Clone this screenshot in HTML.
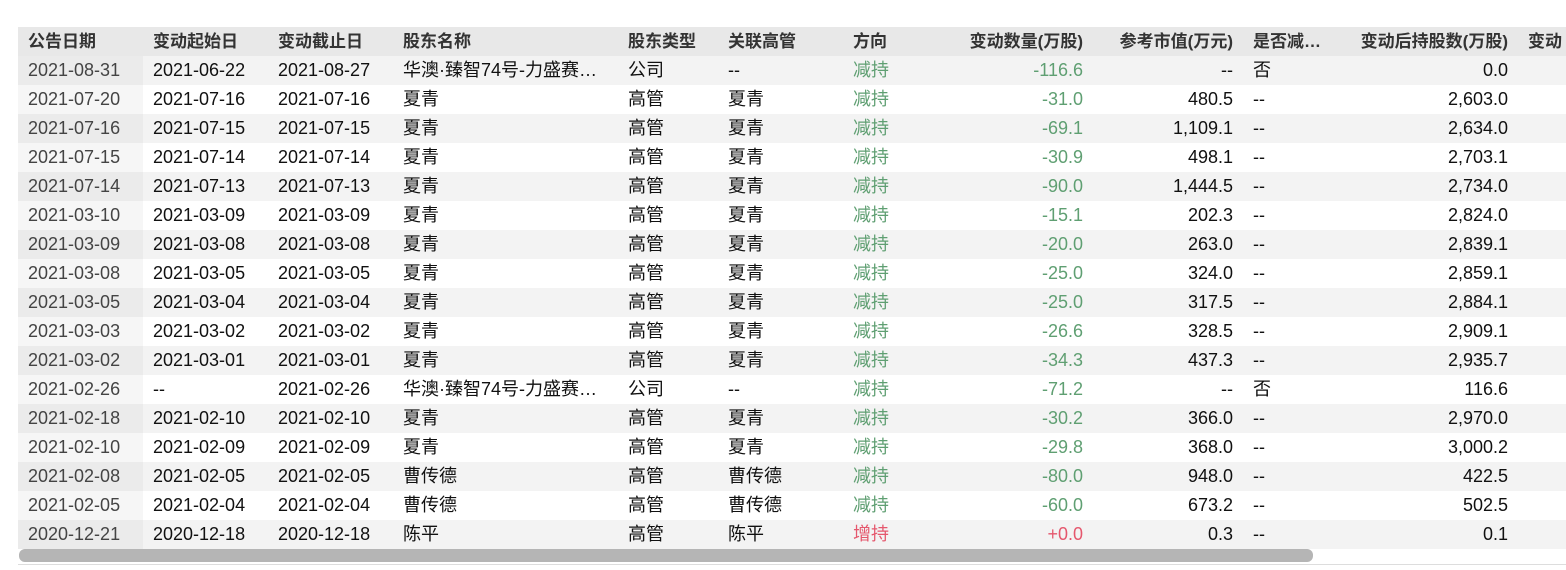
<!DOCTYPE html>
<html><head><meta charset="utf-8"><style>
body{margin:0;width:1566px;height:570px;background:#fff;overflow:hidden;font-family:"Liberation Sans","Noto Sans CJK SC",sans-serif;}
.wrap{position:absolute;left:18px;top:27px;width:1548px;overflow:hidden;}
table{border-collapse:collapse;table-layout:fixed;width:1600px;font-size:18px;}
th,td{height:29px;line-height:29px;padding:0 10px;white-space:nowrap;overflow:hidden;text-overflow:ellipsis;text-align:left;}
th{background:#e8e8e8;color:#333;font-weight:bold;font-size:17px;}
td{color:#111;}
tr:nth-child(even) td{background:#f3f3f3;}
td.f{color:#444;background:#f6f6f6;}
tr:nth-child(even) td.f{background:#ebebeb;}
.r{text-align:right;}
.g{color:#5f9f72;}
.red{color:#e5576d;}
.sb{position:absolute;left:19px;top:549px;width:1294px;height:13px;background:#b5b5b5;border-radius:6px;}
.ln{position:absolute;left:18px;top:564px;width:1548px;height:1px;background:#ddd;}
</style></head><body>
<div class="wrap"><table>
<colgroup><col style="width:125px"><col style="width:125px"><col style="width:125px"><col style="width:225px"><col style="width:100px"><col style="width:125px"><col style="width:100px"><col style="width:150px"><col style="width:150px"><col style="width:100px"><col style="width:175px"><col style="width:100px"></colgroup>
<tr><th>公告日期</th><th>变动起始日</th><th>变动截止日</th><th>股东名称</th><th>股东类型</th><th>关联高管</th><th>方向</th><th class="r">变动数量(万股)</th><th class="r">参考市值(万元)</th><th>是否减…</th><th class="r">变动后持股数(万股)</th><th>变动</th></tr>
<tr><td class="f">2021-08-31</td><td>2021-06-22</td><td>2021-08-27</td><td>华澳·臻智74号-力盛赛车…</td><td>公司</td><td>--</td><td class="g">减持</td><td class="r g">-116.6</td><td class="r">--</td><td>否</td><td class="r">0.0</td><td></td></tr>
<tr><td class="f">2021-07-20</td><td>2021-07-16</td><td>2021-07-16</td><td>夏青</td><td>高管</td><td>夏青</td><td class="g">减持</td><td class="r g">-31.0</td><td class="r">480.5</td><td>--</td><td class="r">2,603.0</td><td></td></tr>
<tr><td class="f">2021-07-16</td><td>2021-07-15</td><td>2021-07-15</td><td>夏青</td><td>高管</td><td>夏青</td><td class="g">减持</td><td class="r g">-69.1</td><td class="r">1,109.1</td><td>--</td><td class="r">2,634.0</td><td></td></tr>
<tr><td class="f">2021-07-15</td><td>2021-07-14</td><td>2021-07-14</td><td>夏青</td><td>高管</td><td>夏青</td><td class="g">减持</td><td class="r g">-30.9</td><td class="r">498.1</td><td>--</td><td class="r">2,703.1</td><td></td></tr>
<tr><td class="f">2021-07-14</td><td>2021-07-13</td><td>2021-07-13</td><td>夏青</td><td>高管</td><td>夏青</td><td class="g">减持</td><td class="r g">-90.0</td><td class="r">1,444.5</td><td>--</td><td class="r">2,734.0</td><td></td></tr>
<tr><td class="f">2021-03-10</td><td>2021-03-09</td><td>2021-03-09</td><td>夏青</td><td>高管</td><td>夏青</td><td class="g">减持</td><td class="r g">-15.1</td><td class="r">202.3</td><td>--</td><td class="r">2,824.0</td><td></td></tr>
<tr><td class="f">2021-03-09</td><td>2021-03-08</td><td>2021-03-08</td><td>夏青</td><td>高管</td><td>夏青</td><td class="g">减持</td><td class="r g">-20.0</td><td class="r">263.0</td><td>--</td><td class="r">2,839.1</td><td></td></tr>
<tr><td class="f">2021-03-08</td><td>2021-03-05</td><td>2021-03-05</td><td>夏青</td><td>高管</td><td>夏青</td><td class="g">减持</td><td class="r g">-25.0</td><td class="r">324.0</td><td>--</td><td class="r">2,859.1</td><td></td></tr>
<tr><td class="f">2021-03-05</td><td>2021-03-04</td><td>2021-03-04</td><td>夏青</td><td>高管</td><td>夏青</td><td class="g">减持</td><td class="r g">-25.0</td><td class="r">317.5</td><td>--</td><td class="r">2,884.1</td><td></td></tr>
<tr><td class="f">2021-03-03</td><td>2021-03-02</td><td>2021-03-02</td><td>夏青</td><td>高管</td><td>夏青</td><td class="g">减持</td><td class="r g">-26.6</td><td class="r">328.5</td><td>--</td><td class="r">2,909.1</td><td></td></tr>
<tr><td class="f">2021-03-02</td><td>2021-03-01</td><td>2021-03-01</td><td>夏青</td><td>高管</td><td>夏青</td><td class="g">减持</td><td class="r g">-34.3</td><td class="r">437.3</td><td>--</td><td class="r">2,935.7</td><td></td></tr>
<tr><td class="f">2021-02-26</td><td>--</td><td>2021-02-26</td><td>华澳·臻智74号-力盛赛车…</td><td>公司</td><td>--</td><td class="g">减持</td><td class="r g">-71.2</td><td class="r">--</td><td>否</td><td class="r">116.6</td><td></td></tr>
<tr><td class="f">2021-02-18</td><td>2021-02-10</td><td>2021-02-10</td><td>夏青</td><td>高管</td><td>夏青</td><td class="g">减持</td><td class="r g">-30.2</td><td class="r">366.0</td><td>--</td><td class="r">2,970.0</td><td></td></tr>
<tr><td class="f">2021-02-10</td><td>2021-02-09</td><td>2021-02-09</td><td>夏青</td><td>高管</td><td>夏青</td><td class="g">减持</td><td class="r g">-29.8</td><td class="r">368.0</td><td>--</td><td class="r">3,000.2</td><td></td></tr>
<tr><td class="f">2021-02-08</td><td>2021-02-05</td><td>2021-02-05</td><td>曹传德</td><td>高管</td><td>曹传德</td><td class="g">减持</td><td class="r g">-80.0</td><td class="r">948.0</td><td>--</td><td class="r">422.5</td><td></td></tr>
<tr><td class="f">2021-02-05</td><td>2021-02-04</td><td>2021-02-04</td><td>曹传德</td><td>高管</td><td>曹传德</td><td class="g">减持</td><td class="r g">-60.0</td><td class="r">673.2</td><td>--</td><td class="r">502.5</td><td></td></tr>
<tr><td class="f">2020-12-21</td><td>2020-12-18</td><td>2020-12-18</td><td>陈平</td><td>高管</td><td>陈平</td><td class="red">增持</td><td class="r red">+0.0</td><td class="r">0.3</td><td>--</td><td class="r">0.1</td><td></td></tr>
</table></div>
<div class="sb"></div><div class="ln"></div>
</body></html>
